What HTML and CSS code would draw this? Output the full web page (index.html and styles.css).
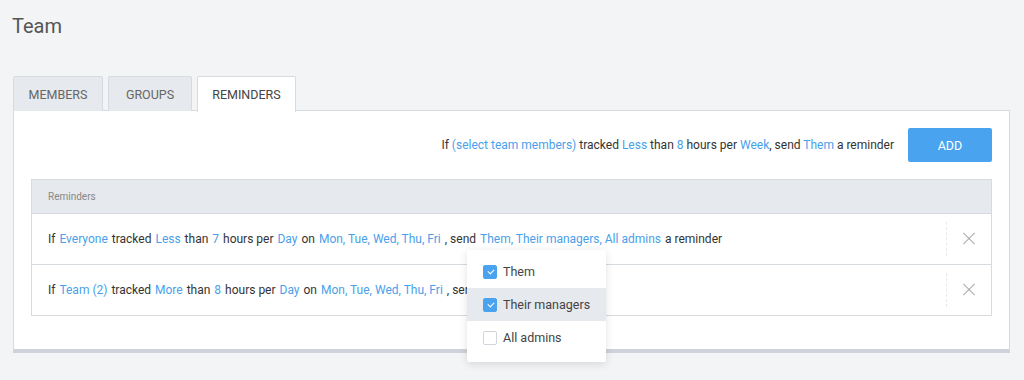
FILE: index.html
```html
<!DOCTYPE html>
<html lang="en">
<head>
    <meta charset="UTF-8">
    <title>Team - Reminders</title>
    <link rel="stylesheet" href="styles.css">
</head>
<body>
    <h1 class="page-title">Team</h1>

    <!-- tabs -->
    <div class="tabs">
        <div class="tab">MEMBERS</div>
        <div class="tab">GROUPS</div>
        <div class="tab active">REMINDERS</div>
    </div>

    <div class="panel">
        <!-- new reminder sentence -->
        <div class="new-reminder">
            <div class="sentence">
                If <span class="link">(select team members)</span> tracked <span class="link">Less</span> than <span class="link">8</span> hours per <span class="link">Week</span>, send <span class="link">Them</span> a reminder
            </div>
            <button class="add-btn">ADD</button>
        </div>

        <!-- reminders list -->
        <div class="reminders">
            <div class="reminders-header">Reminders</div>
            <div class="reminder-row">
                <div class="sentence">
                    If <span class="link">Everyone</span> tracked <span class="link">Less</span> than <span class="link">7</span> hours per <span class="link">Day</span> on <span class="link">Mon, Tue, Wed, Thu, Fri</span> , send <span class="link">Them, Their managers, All admins</span> a reminder
                </div>
                <div class="remove"><span class="x-icon"></span></div>
            </div>
            <div class="reminder-row">
                <div class="sentence">
                    If <span class="link">Team (2)</span> tracked <span class="link">More</span> than <span class="link">8</span> hours per <span class="link">Day</span> on <span class="link">Mon, Tue, Wed, Thu, Fri</span> , send
                </div>
                <div class="remove"><span class="x-icon"></span></div>
            </div>
        </div>
    </div>

    <!-- recipients dropdown -->
    <div class="dropdown">
        <div class="option"><span class="check checked"></span>Them</div>
        <div class="option hover"><span class="check checked"></span>Their managers</div>
        <div class="option"><span class="check"></span>All admins</div>
    </div>
</body>
</html>
```

FILE: styles.css
```css
* {
    margin: 0;
    padding: 0;
    box-sizing: border-box;
}

body {
    font-family: Roboto, "Liberation Sans", sans-serif;
    background-color: #f2f4f6;
    color: #333;
    padding: 14px 14px 0 13px;
    position: relative;
    height: 380px;
    overflow: hidden;
}

.page-title {
    font-size: 20px;
    font-weight: 400;
    color: #555;
    line-height: 24px;
    margin-bottom: 38px;
    margin-left: -1px;
}

/* tabs */
.tabs {
    display: flex;
    gap: 5px;
    height: 35px;
    margin-bottom: -1px;
    position: relative;
    z-index: 1;
}

.tab {
    width: 90px;
    background-color: #e6e9ed;
    border: 1px solid #d6dbe0;
    border-bottom: none;
    border-radius: 2px 2px 0 0;
    font-size: 12.5px;
    color: #666;
    display: flex;
    align-items: center;
    justify-content: center;
}

.tab:nth-child(2) {
    width: 84px;
}

.tab.active {
    width: 99px;
    background-color: #fff;
    color: #444;
    height: 36px;
}

/* panel */
.panel {
    width: 997px;
    height: 243px;
    background-color: #fff;
    border: 1px solid #d6dbe0;
    border-bottom: 4px solid #cdd3d9;
    padding: 17px 17px 0 17px;
}

.new-reminder {
    display: flex;
    justify-content: flex-end;
    align-items: center;
    gap: 14px;
    height: 34px;
}

.sentence {
    font-size: 12px;
    color: #333;
}

.link {
    color: #4a9fea;
    margin: 0 1px;
}

.new-reminder .link {
    margin: 0;
}

.add-btn {
    width: 84px;
    height: 34px;
    background-color: #4aa3ee;
    border: none;
    border-radius: 2px;
    color: #fff;
    font-family: inherit;
    font-size: 12.5px;
}

/* list */
.reminders {
    margin-top: 17px;
    border: 1px solid #d6dbe0;
}

.reminders-header {
    height: 34px;
    background-color: #e6e9ed;
    border-bottom: 1px solid #d6dbe0;
    font-size: 10px;
    color: #888;
    padding-left: 16px;
    display: flex;
    align-items: center;
}

.reminder-row {
    height: 50px;
    display: flex;
    align-items: center;
    padding-left: 16px;
}

.reminder-row + .reminder-row {
    border-top: 1px solid #d6dbe0;
    height: 51px;
}

.reminder-row .sentence {
    flex: 1;
}

.remove {
    width: 45px;
    height: 34px;
    border-left: 1px dashed #e6e9ed;
    display: flex;
    align-items: center;
    justify-content: center;
}

.x-icon {
    width: 12px;
    height: 12px;
    position: relative;
}

.x-icon::before,
.x-icon::after {
    content: '';
    position: absolute;
    left: -2px;
    top: 5px;
    width: 16px;
    height: 1px;
    background-color: #aaa;
    transform: rotate(45deg);
}

.x-icon::after {
    transform: rotate(-45deg);
}

/* dropdown */
.dropdown {
    position: absolute;
    left: 467px;
    top: 250px;
    width: 139px;
    background-color: #fff;
    box-shadow: 0 2px 8px rgba(0, 0, 0, 0.12);
    border-radius: 2px;
    padding: 5px 0 8px;
    z-index: 5;
}

.option {
    height: 33px;
    display: flex;
    align-items: center;
    gap: 6px;
    padding-left: 16px;
    font-size: 12.5px;
    color: #444;
}

.option.hover {
    background-color: #e6e9ed;
}

.check {
    width: 14px;
    height: 14px;
    border: 1px solid #cfd5db;
    border-radius: 2px;
    background-color: #fff;
    position: relative;
}

.check.checked {
    background-color: #4aa3ee;
    border-color: #4aa3ee;
}

.check.checked::after {
    content: '';
    position: absolute;
    left: 4px;
    top: 3px;
    width: 5px;
    height: 3px;
    border-left: 1.5px solid #fff;
    border-bottom: 1.5px solid #fff;
    transform: rotate(-45deg);
}
```
